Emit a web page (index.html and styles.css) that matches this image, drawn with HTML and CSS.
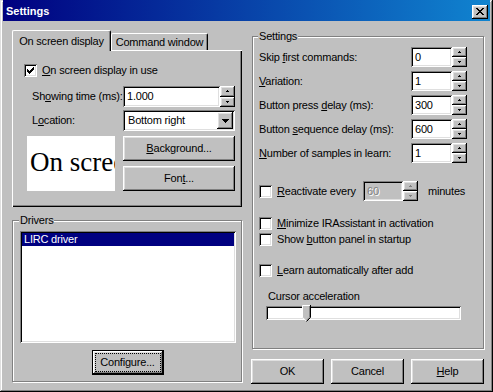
FILE: index.html
```html
<!DOCTYPE html>
<html lang="en">
<head>
    <meta charset="UTF-8">
    <meta name="viewport" content="width=device-width, initial-scale=1.0">
    <title>Settings</title>

    <link rel="stylesheet" href="styles.css">
</head>
<body>

<div class="window">

    <div class="titlebar">
        <span class="title">Settings</span>
        <div class="close-btn">
            <svg width="8" height="7" viewBox="0 0 8 7"><path d="M0 0h2v1H0zM6 0h2v1H6zM1 1h2v1H1zM5 1h2v1H5zM2 2h4v1H2zM3 3h2v1H3zM2 4h4v1H2zM1 5h2v1H1zM5 5h2v1H5zM0 6h2v1H0zM6 6h2v1H6z"/></svg>
        </div>
    </div>

    <div class="client">

        <div class="col-left">

            <div class="tab-row">
                <div class="tab tab-selected">On screen display</div>
                <div class="tab tab-other">Command window</div>
            </div>

            <div class="tab-panel">

                <div class="check-row">
                    <span class="checkbox">
                        <svg width="7" height="7" viewBox="0 0 7 7"><path d="M6 0h1v3H6v1H5v1H4v1H3v1H2V6H1V5H0V2h1v1h1v1h1V3h1V2h1V1h1z"/></svg>
                    </span>
                    <span><u>O</u>n screen display in use</span>
                </div>

                <div class="osd-grid">
                    <span class="osd-label">Sh<u>o</u>wing time (ms):</span>
                    <div class="spin-field">
                        <div class="field">1.000</div>
                        <div class="spin">
                            <div class="spin-btn"><svg width="3" height="2" viewBox="0 0 3 2"><path d="M1 0h1v1h1v1H0V1h1z"/></svg></div>
                            <div class="spin-btn"><svg width="3" height="2" viewBox="0 0 3 2"><path d="M0 0h3v1H2v1H1V1H0z"/></svg></div>
                        </div>
                    </div>

                    <span class="osd-label">L<u>o</u>cation:</span>
                    <div class="select">
                        <span class="select-value">Bottom right</span>
                        <span class="drop-btn"><svg width="7" height="4" viewBox="0 0 7 4"><path d="M0 0h7v1H6v1H5v1H4v1H3V3H2V2H1V1H0z"/></svg></span>
                    </div>
                </div>

                <div class="osd-bottom">
                    <div class="preview">On scree</div>
                    <div class="osd-buttons">
                        <div class="btn"><span><u>B</u>ackground...</span></div>
                        <div class="btn"><span>Fon<u>t</u>...</span></div>
                    </div>
                </div>

            </div>

            <div class="group drivers">
                <span class="group-title">Drivers</span>
                <div class="listbox">
                    <div class="list-item selected">LIRC driver</div>
                </div>
                <div class="btn btn-default configure"><span class="focus-rect">Configure...</span></div>
            </div>

        </div>

        <div class="col-right">

            <div class="group settings">
                <span class="group-title">Settings</span>

                <div class="settings-grid">
                    <span>Skip <u>f</u>irst commands:</span>
                    <div class="field small">0</div>
                    <div class="spin">
                        <div class="spin-btn"><svg width="3" height="2" viewBox="0 0 3 2"><path d="M1 0h1v1h1v1H0V1h1z"/></svg></div>
                        <div class="spin-btn"><svg width="3" height="2" viewBox="0 0 3 2"><path d="M0 0h3v1H2v1H1V1H0z"/></svg></div>
                    </div>

                    <span><u>V</u>ariation:</span>
                    <div class="field small">1</div>
                    <div class="spin">
                        <div class="spin-btn"><svg width="3" height="2" viewBox="0 0 3 2"><path d="M1 0h1v1h1v1H0V1h1z"/></svg></div>
                        <div class="spin-btn"><svg width="3" height="2" viewBox="0 0 3 2"><path d="M0 0h3v1H2v1H1V1H0z"/></svg></div>
                    </div>

                    <span>Button press <u>d</u>elay (ms):</span>
                    <div class="field small">300</div>
                    <div class="spin">
                        <div class="spin-btn"><svg width="3" height="2" viewBox="0 0 3 2"><path d="M1 0h1v1h1v1H0V1h1z"/></svg></div>
                        <div class="spin-btn"><svg width="3" height="2" viewBox="0 0 3 2"><path d="M0 0h3v1H2v1H1V1H0z"/></svg></div>
                    </div>

                    <span>Button <u>s</u>equence delay (ms):</span>
                    <div class="field small">600</div>
                    <div class="spin">
                        <div class="spin-btn"><svg width="3" height="2" viewBox="0 0 3 2"><path d="M1 0h1v1h1v1H0V1h1z"/></svg></div>
                        <div class="spin-btn"><svg width="3" height="2" viewBox="0 0 3 2"><path d="M0 0h3v1H2v1H1V1H0z"/></svg></div>
                    </div>

                    <span><u>N</u>umber of samples in learn:</span>
                    <div class="field small">1</div>
                    <div class="spin">
                        <div class="spin-btn"><svg width="3" height="2" viewBox="0 0 3 2"><path d="M1 0h1v1h1v1H0V1h1z"/></svg></div>
                        <div class="spin-btn"><svg width="3" height="2" viewBox="0 0 3 2"><path d="M0 0h3v1H2v1H1V1H0z"/></svg></div>
                    </div>
                </div>

                <div class="react-row">
                    <span class="checkbox"></span>
                    <span class="react-label"><u>R</u>eactivate every</span>
                    <div class="field small disabled">60</div>
                    <div class="spin">
                        <div class="spin-btn"><svg class="dim" width="3" height="2" viewBox="0 0 3 2"><path d="M1 0h1v1h1v1H0V1h1z"/></svg></div>
                        <div class="spin-btn"><svg class="dim" width="3" height="2" viewBox="0 0 3 2"><path d="M0 0h3v1H2v1H1V1H0z"/></svg></div>
                    </div>
                    <span class="minutes">minutes</span>
                </div>

                <div class="check-row opt-minimize">
                    <span class="checkbox"></span>
                    <span><u>M</u>inimize IRAssistant in activation</span>
                </div>
                <div class="check-row opt-show">
                    <span class="checkbox"></span>
                    <span>Show <u>b</u>utton panel in startup</span>
                </div>
                <div class="check-row opt-learn">
                    <span class="checkbox"></span>
                    <span><u>L</u>earn automatically after add</span>
                </div>

                <div class="slider-label">Cursor acceleration</div>
                <div class="slider-track">
                    <svg class="thumb" width="9" height="17" viewBox="0 0 9 17">
                        <path d="M0 0h9v12l-4.5 4.5L0 12z" fill="#c0c0c0"/>
                        <path d="M0.5 12.5V0.5H8" stroke="#fff" fill="none"/>
                        <path d="M0.5 12.3l4 4" stroke="#fff" fill="none"/>
                        <path d="M8.5 0v12.5l-4 4" stroke="#000" fill="none"/>
                        <path d="M7.5 1v11.3l-3 3" stroke="#808080" fill="none"/>
                    </svg>
                </div>
            </div>

            <div class="dialog-buttons">
                <div class="btn">OK</div>
                <div class="btn">Cancel</div>
                <div class="btn"><span><u>H</u>elp</span></div>
            </div>

        </div>

    </div>

</div>

</body>
</html>
```

FILE: styles.css
```css
body{
    margin: 0;
    background: #c0c0c0;
    font-family: "Liberation Sans", Arial, sans-serif;
    font-size: 11px;
    line-height: 13px;
    letter-spacing: -0.2px;
    color: #000;
}

u{
    text-underline-offset: 1px;
}

svg{
    display: block;
}

.window{
    width: 493px;
    height: 392px;
    box-sizing: border-box;
    padding: 0 3px 3px 3px;
    background: #c0c0c0;
    box-shadow: inset -1px -1px #000, inset 1px 1px #dfdfdf, inset -2px -2px #808080, inset 2px 2px #fff;
    display: flex;
    flex-direction: column;
}

/* title bar */

.titlebar{
    height: 21px;
    box-sizing: border-box;
    padding: 2px 2px 0 3px;
    background: linear-gradient(90deg, #000080, #1084d0);
    color: #fff;
    display: flex;
    align-items: center;
    justify-content: space-between;
}

.title{
    font-weight: bold;
    letter-spacing: 0;
}

.close-btn{
    width: 16px;
    height: 14px;
    box-sizing: border-box;
    background: #c0c0c0;
    box-shadow: inset -1px -1px #000, inset 1px 1px #fff, inset -2px -2px #808080, inset 2px 2px #dfdfdf;
    display: flex;
    align-items: center;
    justify-content: center;
    padding-bottom: 1px;
}

.client{
    display: flex;
    gap: 10px;
    padding: 9px 0 0 9px;
}

.col-left{
    width: 230px;
    display: flex;
    flex-direction: column;
}

.col-right{
    width: 232px;
    display: flex;
    flex-direction: column;
}

/* bevels */

.btn,
.spin-btn,
.drop-btn{
    background: #c0c0c0;
    box-shadow: inset -1px -1px #000, inset 1px 1px #fff, inset -2px -2px #808080, inset 2px 2px #dfdfdf;
    display: flex;
    align-items: center;
    justify-content: center;
    box-sizing: border-box;
}

.field,
.select,
.listbox,
.checkbox,
.slider-track{
    background: #fff;
    box-shadow: inset 1px 1px #808080, inset -1px -1px #fff, inset 2px 2px #000, inset -2px -2px #dfdfdf;
    box-sizing: border-box;
}

/* tabs */

.tab-row{
    height: 20px;
    display: flex;
    align-items: flex-end;
}

.tab{
    box-sizing: border-box;
    height: 17px;
    border-top: 1px solid #fff;
    border-left: 1px solid #fff;
    border-right: 1px solid #000;
    border-radius: 2px 2px 0 0;
    box-shadow: inset -1px 0 #808080;
    display: flex;
    align-items: center;
    justify-content: center;
    background: #c0c0c0;
}

.tab-selected{
    width: 99px;
    height: 21px;
    margin-bottom: -1px;
    position: relative;
    z-index: 1;
}

.tab-other{
    width: 97px;
    padding-top: 1px;
}

.tab-panel{
    height: 157px;
    box-sizing: border-box;
    padding: 14px 6px 0 12px;
    box-shadow: inset 1px 1px #fff, inset -1px -1px #000, inset -2px -2px #808080;
}

.check-row{
    display: flex;
    align-items: center;
    gap: 5px;
    height: 13px;
}

.checkbox{
    width: 13px;
    height: 13px;
    flex: none;
    display: flex;
    align-items: center;
    justify-content: center;
}

.osd-grid{
    margin-top: 9px;
    display: grid;
    grid-template-columns: 99px 112px;
    grid-template-rows: 21px 21px;
    row-gap: 3px;
    align-items: center;
}

.osd-label{
    padding-left: 8px;
}

.spin-field{
    display: flex;
    height: 21px;
}

.field{
    display: flex;
    align-items: center;
    padding: 0 3px 0 4px;
    height: 100%;
}

.spin-field .field{
    width: 97px;
}

.spin{
    width: 15px;
    display: flex;
    flex-direction: column;
}

.spin-btn{
    flex: 1;
}

.select{
    height: 21px;
    padding: 2px;
    display: flex;
    align-items: center;
}

.select-value{
    flex: 1;
    padding-left: 3px;
}

.drop-btn{
    width: 16px;
    height: 17px;
}

.osd-bottom{
    margin-top: 5px;
    display: flex;
}

.preview{
    margin-left: 3px;
    width: 88px;
    height: 55px;
    background: #fff;
    overflow: hidden;
    white-space: nowrap;
    font-family: "Liberation Serif", "Times New Roman", serif;
    font-size: 27px;
    letter-spacing: 0;
    line-height: 52px;
    padding-left: 3px;
    box-sizing: border-box;
}

.osd-buttons{
    margin-left: 8px;
    width: 112px;
    display: flex;
    flex-direction: column;
    gap: 5px;
}

.osd-buttons .btn{
    height: 25px;
}

/* group boxes */

.group{
    box-sizing: border-box;
    border: 1px solid #808080;
    box-shadow: 1px 1px 0 #fff, inset 1px 1px 0 #fff;
    display: flex;
    flex-direction: column;
    align-items: flex-start;
}

.group-title{
    margin: -7px 0 0 -1px;
    padding: 0 1px;
    background: #c0c0c0;
}

.drivers{
    margin-top: 13px;
    height: 162px;
    padding: 0 6px 0 7px;
}

.listbox{
    margin-top: 4px;
    width: 216px;
    height: 112px;
    padding: 2px;
}

.list-item{
    height: 13px;
    padding-left: 2px;
}

.list-item.selected{
    background: #000080;
    color: #fff;
}

.configure{
    margin-top: 7px;
    align-self: center;
    width: 72px;
    height: 25px;
    border: 1px solid #000;
    padding: 2px;
}

.focus-rect{
    flex: 1;
    align-self: stretch;
    border: 1px dotted #000;
    display: flex;
    align-items: center;
    justify-content: center;
}

.settings{
    margin-top: 6px;
    height: 313px;
    padding: 0 6px 0 6px;
}

.settings-grid{
    margin-top: 4px;
    display: grid;
    grid-template-columns: 152px 41px 15px;
    grid-auto-rows: 20px;
    row-gap: 4px;
    align-items: center;
}

.settings-grid .spin{
    height: 20px;
}

.react-row{
    margin-top: 18px;
    height: 20px;
    display: flex;
    align-items: center;
}

.react-label{
    margin-left: 5px;
    width: 86px;
}

.react-row .field{
    width: 40px;
}

.react-row .spin{
    height: 20px;
}

.field.disabled{
    background: #c0c0c0;
    color: #808080;
    text-shadow: 1px 1px #fff;
}

.dim{
    fill: #808080;
}

.minutes{
    margin-left: 10px;
}

.opt-minimize{
    margin-top: 16px;
}

.opt-show{
    margin-top: 3px;
}

.opt-learn{
    margin-top: 18px;
}

.slider-label{
    margin-top: 13px;
    padding-left: 9px;
}

.slider-track{
    margin: 3px 0 0 7px;
    width: 195px;
    height: 14px;
    position: relative;
}

.thumb{
    position: absolute;
    left: 36px;
    top: -1px;
}

.dialog-buttons{
    margin: 10px 0 0 -1px;
    display: flex;
    gap: 7px;
}

.dialog-buttons .btn{
    width: 73px;
    height: 25px;
}
```
